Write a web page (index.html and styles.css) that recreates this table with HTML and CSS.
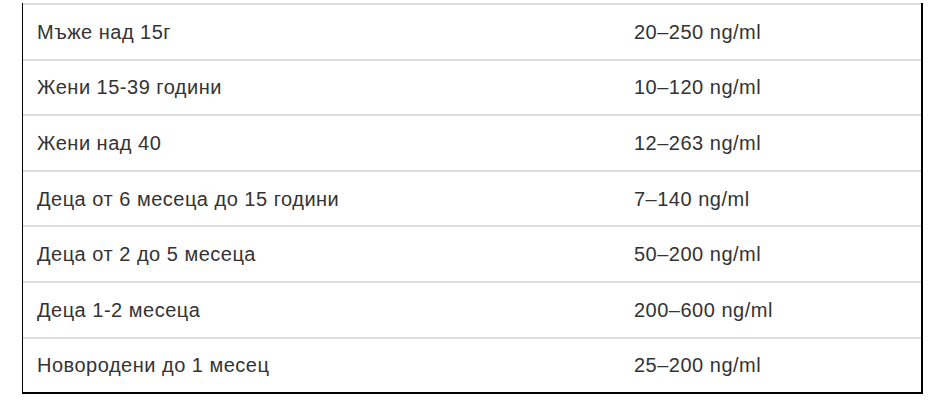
FILE: index.html
```html
<!DOCTYPE html>
<html lang="bg">
<head>
<meta charset="utf-8">
<link rel="stylesheet" href="styles.css">
</head>
<body>
<div class="table">
  <div class="row"><div class="cell c1">Мъже над 15г</div><div class="cell c2">20–250 ng/ml</div></div>
  <div class="row"><div class="cell c1">Жени 15-39 години</div><div class="cell c2">10–120 ng/ml</div></div>
  <div class="row"><div class="cell c1">Жени над 40</div><div class="cell c2">12–263 ng/ml</div></div>
  <div class="row"><div class="cell c1">Деца от 6 месеца до 15 години</div><div class="cell c2">7–140 ng/ml</div></div>
  <div class="row"><div class="cell c1">Деца от 2 до 5 месеца</div><div class="cell c2">50–200 ng/ml</div></div>
  <div class="row"><div class="cell c1">Деца 1-2 месеца</div><div class="cell c2">200–600 ng/ml</div></div>
  <div class="row"><div class="cell c1">Новородени до 1 месец</div><div class="cell c2">25–200 ng/ml</div></div>
</div>
</body>
</html>
```
FILE: styles.css
```css
html, body {
  margin: 0;
  padding: 0;
  background: #fff;
}
body {
  padding: 3px 0 0 22px;
  font-family: "Liberation Sans", Arial, sans-serif;
  font-size: 20px;
  letter-spacing: 0.5px;
  color: #333;
}
.table {
  width: 901px;
  border-left: 1.5px solid #000;
  border-right: 2px solid #000;
  border-bottom: 2px solid #000;
  box-sizing: border-box;
}
.row {
  display: grid;
  grid-template-columns: 597px 1fr;
  height: 55.6px;
  border-top: 2px solid #ddd;
  box-sizing: border-box;
  align-items: center;
  line-height: 1.15;
}
.cell {
  padding: 1px 14px 0;
}
```
